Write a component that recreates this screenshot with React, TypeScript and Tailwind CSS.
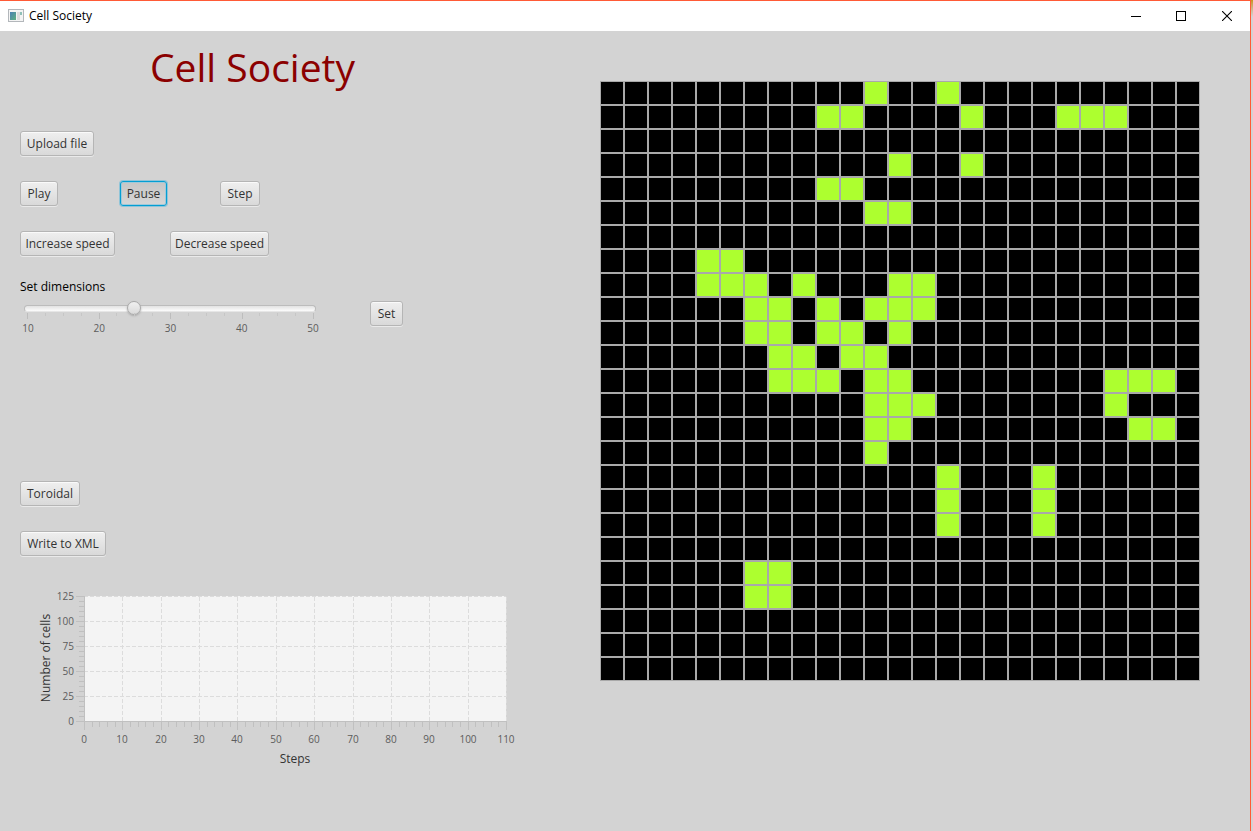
import { useState, type ButtonHTMLAttributes } from "react";

const COLS = 25;
const LIVE: Record<number, number[]> = {
  0: [11, 14],
  1: [9, 10, 15, 19, 20, 21],
  3: [12, 15],
  4: [9, 10],
  5: [11, 12],
  7: [4, 5],
  8: [4, 5, 6, 8, 12, 13],
  9: [6, 7, 9, 11, 12, 13],
  10: [6, 7, 9, 10, 12],
  11: [7, 8, 10, 11],
  12: [7, 8, 9, 11, 12, 21, 22, 23],
  13: [11, 12, 13, 21],
  14: [11, 12, 22, 23],
  15: [11],
  16: [14, 18],
  17: [14, 18],
  18: [14, 18],
  20: [6, 7],
  21: [6, 7],
};

function Button({ className = "", ...rest }: ButtonHTMLAttributes<HTMLButtonElement>) {
  return (
    <button
      type="button"
      className={
        "flex h-[25px] items-center justify-center justify-self-start whitespace-nowrap rounded-[3px] border text-xs text-[#333333] " +
        className
      }
      {...rest}
    />
  );
}

const PLAIN = "border-[#b5b5b5] bg-linear-to-b from-[#efefef] to-[#d9d9d9] shadow-[inset_0_1px_0_#fafafa,0_1px_0_#eaeaea]";
const FOCUSED =
  "border-[#039ed3] bg-linear-to-b from-[#c6c6c6] to-[#d6d6d6] shadow-[0_0_0_1px_#8fc4d8,inset_0_0_0_1px_#9fc9da]";

function TitleBar() {
  return (
    <header className="flex h-[30px] shrink-0 items-center bg-white pl-2">
      <svg width="16" height="13" viewBox="0 0 16 13" className="-mt-0.5" aria-hidden="true">
        <defs>
          <linearGradient id="pane" x1="0" y1="0" x2="1" y2="1">
            <stop offset="0" stopColor="#4a80b4" />
            <stop offset="1" stopColor="#5fb080" />
          </linearGradient>
        </defs>
        <rect x="0.5" y="0.5" width="15" height="12" fill="#f4f4f4" stroke="#b3b7bb" />
        <rect x="2" y="3" width="6" height="8" fill="url(#pane)" />
        <rect x="9" y="3" width="3" height="8" fill="#dcdcdc" />
        <rect x="12" y="3" width="2" height="3" fill="#8fc0b8" />
      </svg>
      <span className="ml-[5px] grow text-xs text-black">Cell Society</span>
      <button type="button" aria-label="Minimize" className="flex h-full w-[44px] items-center justify-center">
        <svg width="10" height="10" viewBox="0 0 10 10" stroke="#000" shapeRendering="crispEdges">
          <path d="M0 5.5H10" />
        </svg>
      </button>
      <button type="button" aria-label="Maximize" className="flex h-full w-[46px] items-center justify-center">
        <svg width="10" height="10" viewBox="0 0 10 10" stroke="#000" fill="none" shapeRendering="crispEdges">
          <rect x="0.5" y="0.5" width="9" height="9" />
        </svg>
      </button>
      <button type="button" aria-label="Close" className="flex h-full w-[46px] items-center justify-center">
        <svg width="10" height="10" viewBox="0 0 10 10" stroke="#000" strokeWidth="1.1">
          <path d="M0 0L10 10M10 0L0 10" />
        </svg>
      </button>
    </header>
  );
}

function DimensionSlider() {
  const [size, setSize] = useState(25);
  return (
    <div className="flex w-[300px] flex-col">
      <label htmlFor="dimensions" className="h-5 text-xs leading-[12px] text-black">
        Set dimensions
      </label>
      <div className="grid h-[14px] items-center">
        <div className="col-start-1 row-start-1 mr-1 ml-1 h-[7px] rounded-full border border-[#bcbcbc] border-b-[#e6e6e6] bg-linear-to-b from-[#e2e2e2] to-[#fcfcfc]" />
        <input
          id="dimensions"
          type="range"
          min={10}
          max={50}
          value={size}
          onChange={(e) => setSize(Number(e.target.value))}
          className="col-start-1 row-start-1 m-0 h-[14px] w-full appearance-none bg-transparent [&::-webkit-slider-thumb]:size-[14px] [&::-webkit-slider-thumb]:appearance-none [&::-webkit-slider-thumb]:rounded-full [&::-webkit-slider-thumb]:border [&::-webkit-slider-thumb]:border-[#a9a9a9] [&::-webkit-slider-thumb]:bg-linear-to-b [&::-webkit-slider-thumb]:from-[#f0f0f0] [&::-webkit-slider-thumb]:to-[#dadada] [&::-webkit-slider-thumb]:shadow-[0_1px_2px_#aaaaaa]"
        />
      </div>
      <svg width="300" height="6" viewBox="0 0 300 6" shapeRendering="crispEdges" className="-mt-0.5" aria-hidden="true">
        {Array.from({ length: 17 }, (_, i) => (
          <rect
            key={i}
            x={Math.round(7 + i * 17.875)}
            y="0"
            width="1"
            height={i % 4 === 0 ? 6 : 3}
            fill={i % 4 === 0 ? "#bdbdbd" : "#c6c6c6"}
          />
        ))}
      </svg>
      <div className="-mr-px flex justify-between pt-0.5 text-[10px] leading-[14px] text-[#5c5c5c]">
        {[10, 20, 30, 40, 50].map((n) => (
          <span key={n} className="w-4 text-center">
            {n}
          </span>
        ))}
      </div>
    </div>
  );
}

function Chart() {
  const left = 64;
  const top = 15;
  const w = 422;
  const h = 125;
  const px = (v: number) => Math.round(left + (v * w) / 110);
  return (
    <svg width="520" height="200" viewBox="0 0 520 200" role="img" aria-label="Number of cells by step">
      <rect x={left} y={top} width={w} height={h} fill="#f4f4f4" />
      <g stroke="#dcdcdc" strokeDasharray="4 2" shapeRendering="crispEdges">
        {Array.from({ length: 11 }, (_, i) => (
          <path key={i} d={`M${px((i + 1) * 10) + 0.5} ${top + h}V${top}`} />
        ))}
        {Array.from({ length: 5 }, (_, i) => (
          <path key={i} d={`M${left} ${top + i * 25 + 0.5}H${left + w}`} />
        ))}
      </g>
      <g stroke="#c0c0c0" shapeRendering="crispEdges">
        <path d={`M${left + 0.5} ${top}V${top + h + 1}M${left} ${top + h + 0.5}H${left + w + 1}`} />
        {Array.from({ length: 56 }, (_, i) => (
          <path key={i} d={`M${px(i * 2) + 0.5} ${top + h + 1}v${i % 5 === 0 ? 8 : 5}`} />
        ))}
        {Array.from({ length: 26 }, (_, i) => (
          <path key={i} d={`M${left} ${top + i * 5 + 0.5}h${i % 5 === 0 ? -8 : -5}`} />
        ))}
      </g>
      <g className="fill-[#5c5c5c] text-[10px]">
        {Array.from({ length: 12 }, (_, i) => (
          <text key={i} x={px(i * 10)} y="162" textAnchor="middle">
            {i * 10}
          </text>
        ))}
        {[125, 100, 75, 50, 25, 0].map((n, i) => (
          <text key={n} x="54" y={top + i * 25 + 4} textAnchor="end">
            {n}
          </text>
        ))}
      </g>
      <g className="fill-[#333333] text-xs" textAnchor="middle">
        <text x="275" y="182">
          Steps
        </text>
        <text transform="translate(30 77) rotate(-90)">Number of cells</text>
      </g>
    </svg>
  );
}

function CellGrid() {
  return (
    <div className="grid w-[600px] grid-cols-[repeat(25,24px)]">
      {Array.from({ length: COLS * COLS }, (_, i) => {
        const live = LIVE[Math.floor(i / COLS)]?.includes(i % COLS);
        return <div key={i} className={`size-6 border border-[#a9a9a9] ${live ? "bg-[#adff2f]" : "bg-black"}`} />;
      })}
    </div>
  );
}

export default function App() {
  return (
    <div className="flex min-h-screen bg-[#d3d3d3] font-['Open_Sans','Noto_Sans',sans-serif]">
      <div className="flex grow flex-col border-t border-r border-[#ff5a36]">
        <TitleBar />
        <main className="flex grow">
          <section className="flex w-[48%] flex-col gap-6 pl-5">
            <h1 className="-mb-6 h-[100px] pl-[130px] pt-2 text-[39px] leading-[56px] text-[#8b0000]">Cell Society</h1>
            <Button className={`${PLAIN} mb-px w-[74px]`}>Upload file</Button>
            <div className="mb-px grid grid-cols-[100px_100px_auto]">
              <Button className={`${PLAIN} w-[38px]`}>Play</Button>
              <Button className={`${FOCUSED} w-[47px]`}>Pause</Button>
              <Button className={`${PLAIN} w-[40px]`}>Step</Button>
            </div>
            <div className="mb-px grid grid-cols-[150px_auto]">
              <Button className={`${PLAIN} w-[95px]`}>Increase speed</Button>
              <Button className={`${PLAIN} w-[99px]`}>Decrease speed</Button>
            </div>
            <div className="flex h-[176px] gap-[50px]">
              <DimensionSlider />
              <Button className={`${PLAIN} mt-5 w-[33px]`}>Set</Button>
            </div>
            <Button className={`${PLAIN} mb-px w-[60px]`}>Toroidal</Button>
            <Button className={`${PLAIN} mb-px w-[86px]`}>Write to XML</Button>
            <Chart />
          </section>
          <section className="pt-[50px]">
            <CellGrid />
          </section>
        </main>
      </div>
      <aside className="w-[2px] shrink-0 bg-linear-to-b from-[#c8960c] from-0% via-[#d3d3d3] via-2% to-[#d3d3d3]" />
    </div>
  );
}
